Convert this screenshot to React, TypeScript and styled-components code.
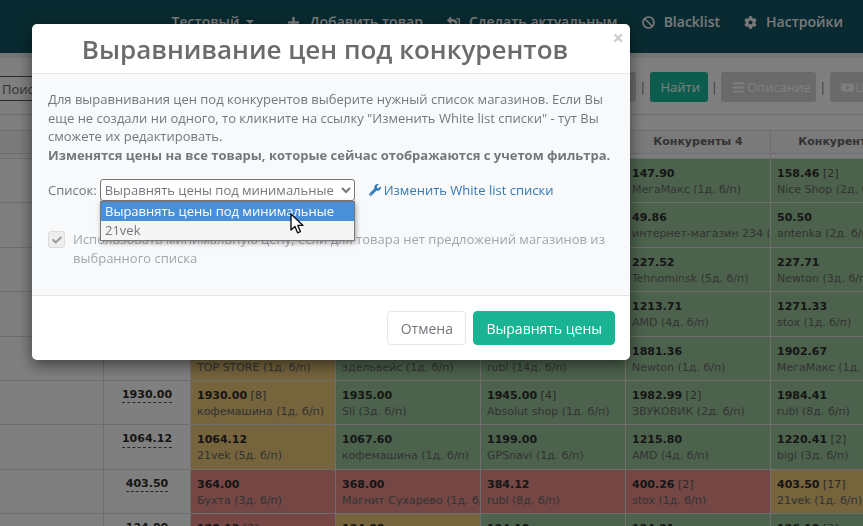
import styled, { createGlobalStyle } from 'styled-components';
import { FaBan, FaBars, FaCheck, FaCog, FaMoneyBill, FaPlus, FaShareSquare, FaWrench } from 'react-icons/fa';

type Tone = 'green' | 'yellow' | 'red';

interface Offer {
  tone: Tone;
  price?: string;
  count?: number;
  shop?: string;
}

interface Row {
  base?: string;
  offers: Offer[];
}

const toneColors: Record<Tone, string> = {
  green: '#98c49a',
  yellow: '#eac878',
  red: '#e88f8a',
};

const rows: Row[] = [
  {
    offers: [
      { tone: 'green' },
      { tone: 'green' },
      { tone: 'green' },
      { tone: 'green', price: '147.90', shop: 'МегаМакс (1д. б/п)' },
      { tone: 'green', price: '158.46', count: 2, shop: 'Nice Shop (2д. б/п)' },
    ],
  },
  {
    offers: [
      { tone: 'green' },
      { tone: 'green' },
      { tone: 'green' },
      { tone: 'green', price: '49.86', shop: 'интернет-магазин 234 (1д. б/п)' },
      { tone: 'green', price: '50.50', shop: 'antenka (2д. б/п)' },
    ],
  },
  {
    offers: [
      { tone: 'green' },
      { tone: 'green' },
      { tone: 'green' },
      { tone: 'green', price: '227.52', shop: 'Tehnominsk (5д. б/п)' },
      { tone: 'green', price: '227.71', shop: 'Newton (3д. б/п)' },
    ],
  },
  {
    offers: [
      { tone: 'green' },
      { tone: 'green' },
      { tone: 'green' },
      { tone: 'green', price: '1213.71', shop: 'AMD (4д. б/п)' },
      { tone: 'green', price: '1271.33', shop: 'stox (1д. б/п)' },
    ],
  },
  {
    offers: [
      { tone: 'yellow', price: '\u00a0', shop: 'TOP STORE (1д. б/п)' },
      { tone: 'green', price: '\u00a0', shop: 'эдельвейс (1д. б/п)' },
      { tone: 'green', price: '\u00a0', shop: 'rubl (14д. б/п)' },
      { tone: 'green', price: '1881.36', shop: 'Newton (1д. б/п)' },
      { tone: 'green', price: '1902.67', shop: 'МегаМакс (1д. б/п)' },
    ],
  },
  {
    base: '1930.00',
    offers: [
      { tone: 'yellow', price: '1930.00', count: 8, shop: 'кофемашина (1д. б/п)' },
      { tone: 'green', price: '1935.00', shop: 'Sli (3д. б/п)' },
      { tone: 'green', price: '1945.00', count: 4, shop: 'Absolut shop (1д. б/п)' },
      { tone: 'green', price: '1982.99', count: 2, shop: 'ЗВУКОВИК (2д. б/п)' },
      { tone: 'green', price: '1984.41', shop: 'rubl (8д. б/п)' },
    ],
  },
  {
    base: '1064.12',
    offers: [
      { tone: 'yellow', price: '1064.12', shop: '21vek (5д. б/п)' },
      { tone: 'green', price: '1067.60', shop: 'кофемашина (1д. б/п)' },
      { tone: 'green', price: '1199.00', shop: 'GPSnavi (1д. б/п)' },
      { tone: 'green', price: '1215.80', shop: 'AMD (4д. б/п)' },
      { tone: 'green', price: '1220.41', count: 2, shop: 'bigi (3д. б/п)' },
    ],
  },
  {
    base: '403.50',
    offers: [
      { tone: 'red', price: '364.00', shop: 'Бухта (3д. б/п)' },
      { tone: 'red', price: '368.00', shop: 'Магнит Сухарево (1д. б/п)' },
      { tone: 'red', price: '384.12', shop: 'rubl (8д. б/п)' },
      { tone: 'red', price: '400.26', count: 2, shop: 'stox (1д. б/п)' },
      { tone: 'yellow', price: '403.50', count: 17, shop: '21vek (1д. б/п)' },
    ],
  },
  {
    base: '124.00',
    offers: [
      { tone: 'red', price: '120.13', count: 2 },
      { tone: 'yellow', price: '124.00' },
      { tone: 'green', price: '124.10' },
      { tone: 'green', price: '124.21' },
      { tone: 'green', price: '126.10', count: 2 },
    ],
  },
];

const GlobalStyle = createGlobalStyle`
  html, body {
    margin: 0;
    height: 100%;
    overflow: hidden;
    background: #fff;
  }
`;

const Page = styled.div`
  width: 863px;
  height: 526px;
  overflow: hidden;
  font-family: 'DejaVu Sans', sans-serif;
`;

const TopNav = styled.nav`
  height: 53px;
  box-sizing: border-box;
  padding: 0 20px 9px 0;
  display: flex;
  justify-content: flex-end;
  align-items: center;
  column-gap: 24px;
  background: #105560;
  font-family: 'Open Sans', sans-serif;
  font-size: 14px;
  font-weight: 600;
  line-height: 18px;
  color: #f2f2f2;
`;

const NavItem = styled.span`
  display: flex;
  align-items: center;
  column-gap: 9px;
  white-space: nowrap;

  svg {
    font-size: 13px;
  }
`;

const UserItem = styled(NavItem)`
  margin-right: 9px;
`;

const Caret = styled.i`
  width: 0;
  height: 0;
  border-top: 4px solid #f2f2f2;
  border-left: 4px solid transparent;
  border-right: 4px solid transparent;
  margin-left: -2px;
`;

const MirroredIcon = styled(FaShareSquare)`
  transform: scaleX(-1);
`;

const Toolbar = styled.div`
  height: 62px;
  box-sizing: border-box;
  padding: 14px 0 0;
  display: flex;
  align-items: flex-start;
  border-top: 5px solid #ececec;
  border-bottom: 1px solid #ddd;
  background: #fff;
  font-family: 'Open Sans', sans-serif;
  font-size: 13px;
`;

const SearchInput = styled.input`
  flex: 0 0 600px;
  box-sizing: border-box;
  height: 25px;
  margin-top: 4px;
  padding: 0 2px;
  border: 1px solid #555;
  border-left: 0;
  font: inherit;
  font-size: 13px;
  color: #666;

  &::placeholder {
    color: #666;
    opacity: 1;
  }
`;

const ToolButton = styled.span<{ $primary?: boolean; $width: number }>`
  flex: 0 0 ${({ $width }) => $width}px;
  box-sizing: border-box;
  height: 30px;
  padding-left: 11px;
  display: flex;
  align-items: center;
  column-gap: 2px;
  border-radius: 3px;
  white-space: nowrap;
  background: ${({ $primary }) => ($primary ? '#1abb9c' : '#d4d4d4')};
  color: #fff;
`;

const Separator = styled.span`
  flex: 0 0 13.5px;
  text-align: center;
  line-height: 30px;
  color: #777;
`;

const SubBar = styled.div`
  height: 16px;
  border-bottom: 1px solid #ddd;
  box-sizing: border-box;
  background: #fff;
`;

const Table = styled.div`
  display: grid;
  grid-template-columns: 104px 87px repeat(5, 145px);
  grid-template-rows: 28px;
  grid-auto-rows: 44.375px;
`;

const HeadCell = styled.div`
  box-sizing: border-box;
  padding-top: 3px;
  border-right: 1px solid #ddd;
  border-bottom: 1px solid #ddd;
  box-shadow: inset 0 -4px 0 #fafafa, inset 0 -5px 0 #ddd;
  background: #f5f5f5;
  font-size: 11px;
  font-weight: 700;
  line-height: 15px;
  text-align: center;
  color: #666;
  white-space: nowrap;
`;

const BlankCell = styled.div`
  border-right: 1px solid #ddd;
  border-bottom: 1px solid #ddd;
  background: #fff;
`;

const BaseCell = styled(BlankCell)`
  box-sizing: border-box;
  padding-top: 7px;
  display: flex;
  justify-content: center;
  align-items: flex-start;
`;

const BasePrice = styled.span`
  border-bottom: 1px dashed #555;
  font-size: 11px;
  font-weight: 700;
  line-height: 14.5px;
  color: #2c2c2c;
`;

const OfferCell = styled.div<{ $tone: Tone }>`
  box-sizing: border-box;
  padding: 7px 6px 0;
  overflow: hidden;
  white-space: nowrap;
  border-right: 1px solid #ddd;
  border-bottom: 1px solid #ddd;
  background: ${({ $tone }) => toneColors[$tone]};
  font-size: 11px;
  line-height: 16px;
`;

const Price = styled.div`
  font-weight: 700;
  color: #2c2c2c;

  span {
    font-weight: 400;
    color: #555;
  }
`;

const Shop = styled.div`
  color: #666;
`;

const Backdrop = styled.div`
  position: fixed;
  inset: 0;
  background: rgba(0, 0, 0, 0.5);
`;

const Modal = styled.div`
  position: relative;
  width: 598px;
  margin: 24px 0 0 32px;
  border-radius: 5px;
  background: #fff;
  box-shadow: 0 5px 15px rgba(0, 0, 0, 0.5);
  font-family: 'Open Sans', sans-serif;
  color: #73879c;
`;

const ModalHeader = styled.div`
  height: 50px;
  box-sizing: border-box;
  padding-right: 12px;
  border-bottom: 1px solid #e5e5e5;
`;

const ModalTitle = styled.h2`
  margin: 0;
  font-size: 26px;
  font-weight: 600;
  line-height: 50px;
  text-align: center;
  color: #6b6b6b;
`;

const CloseMark = styled.span`
  position: absolute;
  top: 4px;
  right: 6px;
  font-size: 20px;
  font-weight: 700;
  line-height: 20px;
  color: #ccc;
`;

const ModalBody = styled.div`
  height: 222px;
  box-sizing: border-box;
  padding: 16px 16px 0;
  background: #f8f9fb;
  border-bottom: 1px solid #e5e5e5;
  font-size: 13px;
  line-height: 18.6px;
  color: #73787e;
`;

const Intro = styled.p`
  margin: 0;
`;

const ListRow = styled.div`
  position: relative;
  margin-top: 15px;
  height: 22px;
  display: flex;
  align-items: center;
  column-gap: 3px;
`;

const ListSelect = styled.select`
  width: 255px;
  height: 22px;
  box-sizing: border-box;
  border: 1px solid #777;
  border-radius: 3px;
  padding: 0;
  background: #fff;
  font-family: 'Open Sans', sans-serif;
  font-size: 13px;
  color: #73787e;
`;

const EditLink = styled.a`
  margin-left: 11px;
  display: inline-flex;
  align-items: center;
  column-gap: 3px;
  color: #337ab7;
`;

const OptionList = styled.div`
  position: absolute;
  top: 22px;
  left: 52px;
  width: 255px;
  box-sizing: border-box;
  border: 1px solid #777;
  background: #f5f5f5;
  box-shadow: 1px 2px 5px rgba(0, 0, 0, 0.35);
  z-index: 2;
`;

const OptionItem = styled.div<{ $active?: boolean }>`
  height: 19px;
  padding-left: 4px;
  line-height: 19px;
  background: ${({ $active }) => ($active ? '#4a90d9' : 'transparent')};
  color: ${({ $active }) => ($active ? '#fff' : '#73787e')};
`;

const Pointer = styled.svg`
  position: absolute;
  left: 290px;
  top: 213px;
  z-index: 3;
`;

const CheckRow = styled.label`
  margin-top: 29px;
  display: flex;
  align-items: flex-start;
  column-gap: 8px;
  color: #a3a6a9;
`;

const CheckBox = styled.span`
  flex: 0 0 17px;
  height: 17px;
  box-sizing: border-box;
  margin-top: 1px;
  display: flex;
  align-items: center;
  justify-content: center;
  border: 1px solid #dcdcdc;
  border-radius: 3px;
  background: #eee;
  color: #999;
  font-size: 10px;
`;

const ModalFooter = styled.div`
  height: 64px;
  box-sizing: border-box;
  padding: 15px 15px 0;
  display: flex;
  justify-content: flex-end;
  align-items: flex-start;
  column-gap: 7px;
`;

const FooterButton = styled.button<{ $primary?: boolean }>`
  height: 34px;
  padding: 0 ${({ $primary }) => ($primary ? 12 : 12.5)}px;
  border: 1px solid ${({ $primary }) => ($primary ? '#1ab394' : '#e6e6e6')};
  border-radius: 4px;
  background: ${({ $primary }) => ($primary ? '#1ab394' : '#fff')};
  color: ${({ $primary }) => ($primary ? '#fff' : '#73787e')};
  font-family: 'Open Sans', sans-serif;
  font-size: 14px;
`;

const App = () => (
  <Page>
    <GlobalStyle />
    <TopNav>
      <UserItem>
        Тестовый <Caret />
      </UserItem>
      <NavItem>
        <FaPlus /> Добавить товар
      </NavItem>
      <NavItem>
        <MirroredIcon /> Сделать актуальным
      </NavItem>
      <NavItem>
        <FaBan /> Blacklist
      </NavItem>
      <NavItem>
        <FaCog /> Настройки
      </NavItem>
    </TopNav>
    <Toolbar>
      <SearchInput placeholder="Поиск" readOnly />
      <ToolButton $width={36} />
      <Separator>|</Separator>
      <ToolButton $primary $width={58}>Найти</ToolButton>
      <Separator>|</Separator>
      <ToolButton $width={95}>
        <FaBars /> Описание
      </ToolButton>
      <Separator>|</Separator>
      <ToolButton $width={95}>
        <FaMoneyBill /> Цены
      </ToolButton>
    </Toolbar>
    <SubBar />
    <Table>
      <HeadCell />
      <HeadCell />
      {[1, 2, 3, 4, 5].map((n) => (
        <HeadCell key={n}>Конкуренты {n}</HeadCell>
      ))}
      {rows.map((row, rowIndex) => (
        <Row key={rowIndex} row={row} />
      ))}
    </Table>
    <Backdrop>
      <Modal>
        <ModalHeader>
          <ModalTitle>Выравнивание цен под конкурентов</ModalTitle>
          <CloseMark>×</CloseMark>
        </ModalHeader>
        <ModalBody>
          <Intro>
            Для выравнивания цен под конкурентов выберите нужный список магазинов. Если Вы
            еще не создали ни одного, то кликните на ссылку "Изменить White list списки" - тут Вы
            сможете их редактировать.
            <br />
            <b>Изменятся цены на все товары, которые сейчас отображаются с учетом фильтра.</b>
          </Intro>
          <ListRow>
            Список:
            <ListSelect defaultValue="min">
              <option value="min">Выравнять цены под минимальные</option>
              <option value="21vek">21vek</option>
            </ListSelect>
            <EditLink>
              <FaWrench size={12} /> Изменить White list списки
            </EditLink>
            <OptionList>
              <OptionItem $active>Выравнять цены под минимальные</OptionItem>
              <OptionItem>21vek</OptionItem>
            </OptionList>
          </ListRow>
          <CheckRow>
            <CheckBox>
              <FaCheck />
            </CheckBox>
            <span>
              Использовать минимальную цену, если для товара нет предложений магазинов из
              выбранного списка
            </span>
          </CheckRow>
        </ModalBody>
        <ModalFooter>
          <FooterButton>Отмена</FooterButton>
          <FooterButton $primary>Выравнять цены</FooterButton>
        </ModalFooter>
      </Modal>
      <Pointer width="14" height="22" viewBox="0 0 14 22">
        <path
          d="M1 1v16l4-3.6 2.6 6.4 2.8-1.2-2.6-6.2H13z"
          fill="#fff"
          stroke="#111"
          strokeWidth="1.4"
          strokeLinejoin="round"
        />
      </Pointer>
    </Backdrop>
  </Page>
);

const Row = ({ row }: { row: Row }) => (
  <>
    <BlankCell />
    <BaseCell>{row.base && <BasePrice>{row.base}</BasePrice>}</BaseCell>
    {row.offers.map((offer, index) => (
      <OfferCell key={index} $tone={offer.tone}>
        {offer.price && (
          <Price>
            {offer.price}
            {offer.count && <span> [{offer.count}]</span>}
          </Price>
        )}
        {offer.shop && <Shop>{offer.shop}</Shop>}
      </OfferCell>
    ))}
  </>
);

export default App;
